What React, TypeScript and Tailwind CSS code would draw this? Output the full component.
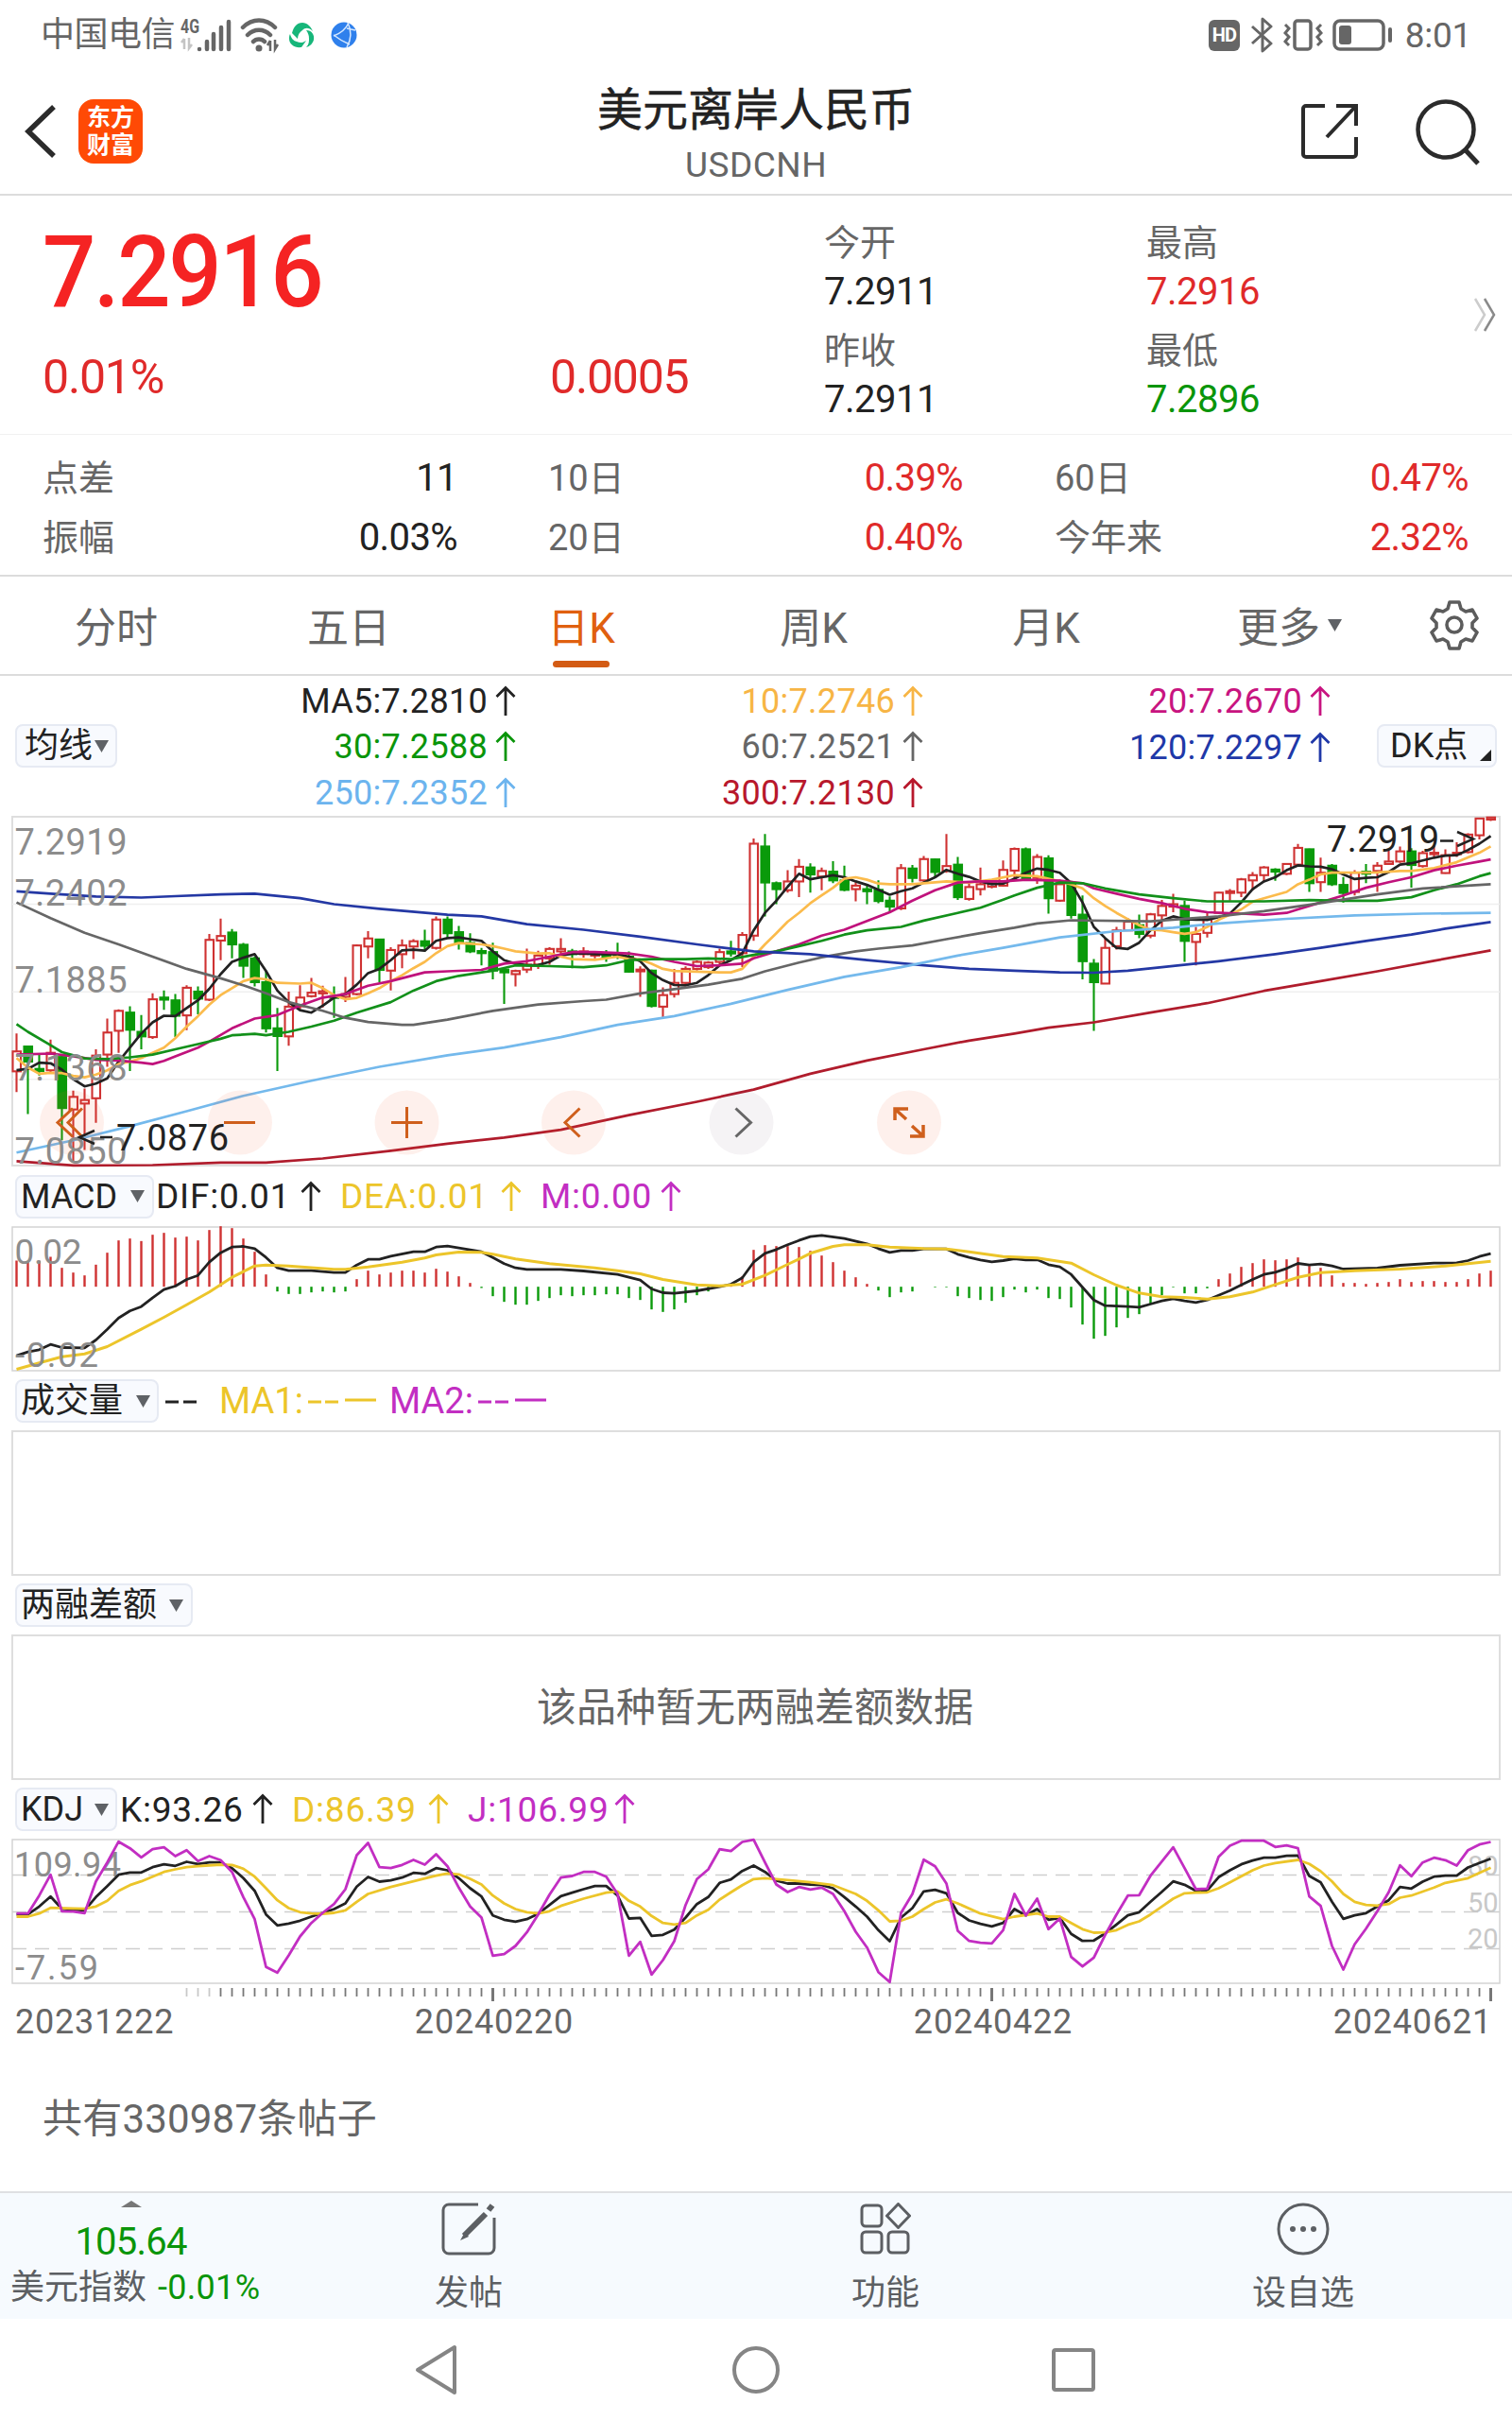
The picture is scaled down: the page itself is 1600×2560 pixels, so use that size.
import React from "react";
import clsx from "clsx";

/* ---------- chart data ---------- */

// one slot per trading day
const STEP = 12;
const X0 = 5.5;
const xAt = (i: number) => X0 + i * STEP;

type Candle = [number, number, number, number, number];
// high, body top, body bottom, low, 1 = up / 0 = down
const CANDLES: Candle[] = [
  [1035, 1086, 1143, 1202, 1], [1070, 1072, 1115, 1265, 0], [1095, 1136, 1142, 1155, 0], [1052, 1090, 1140, 1145, 1],
  [1095, 1102, 1248, 1340, 0], [1198, 1216, 1252, 1400, 1], [1192, 1225, 1235, 1368, 1], [1080, 1098, 1220, 1290, 1],
  [992, 1032, 1095, 1130, 1], [966, 970, 1027, 1090, 1], [957, 975, 1024, 1142, 0], [982, 1030, 1043, 1080, 0],
  [920, 937, 1045, 1050, 1], [912, 932, 938, 967, 0], [922, 940, 984, 1045, 0], [897, 904, 983, 1025, 1],
  [900, 915, 935, 980, 0], [750, 767, 938, 942, 1], [706, 756, 769, 825, 1], [736, 746, 780, 820, 0],
  [776, 781, 841, 876, 0], [815, 820, 888, 900, 0], [855, 888, 1020, 1032, 0], [962, 1020, 1042, 1142, 0],
  [915, 958, 1043, 1070, 1], [897, 932, 957, 965, 1], [876, 918, 928, 932, 1], [898, 914, 920, 960, 1],
  [900, 928, 933, 990, 0], [873, 922, 930, 945, 1], [780, 783, 922, 926, 1], [742, 763, 786, 820, 1],
  [764, 766, 853, 888, 0], [788, 796, 855, 912, 1], [766, 783, 808, 848, 1], [765, 771, 786, 822, 1],
  [738, 771, 784, 800, 0], [700, 709, 790, 795, 1], [700, 709, 748, 760, 0], [727, 745, 775, 795, 0],
  [748, 776, 800, 805, 0], [790, 799, 805, 840, 0], [775, 802, 855, 880, 0], [845, 852, 860, 950, 0],
  [852, 856, 865, 900, 1], [792, 838, 852, 862, 1], [798, 812, 838, 850, 1], [788, 793, 820, 838, 1],
  [762, 793, 800, 815, 1], [793, 800, 808, 848, 0], [788, 800, 808, 818, 1], [800, 806, 812, 820, 1],
  [796, 808, 816, 830, 0], [775, 805, 812, 822, 0], [800, 815, 858, 860, 0], [843, 852, 857, 930, 1],
  [852, 855, 956, 960, 0], [903, 925, 958, 992, 1], [850, 890, 922, 932, 1], [843, 850, 890, 900, 1],
  [826, 830, 850, 855, 1], [828, 832, 845, 850, 1], [792, 802, 830, 840, 1], [770, 800, 806, 815, 0],
  [745, 753, 805, 845, 1], [477, 492, 755, 770, 1], [464, 500, 603, 700, 0], [600, 605, 622, 665, 0],
  [568, 600, 625, 632, 1], [536, 558, 600, 645, 1], [548, 560, 580, 632, 0], [560, 570, 586, 625, 1],
  [542, 572, 597, 605, 0], [555, 597, 624, 628, 0], [603, 612, 622, 657, 1], [612, 622, 628, 665, 0],
  [597, 624, 656, 662, 0], [643, 655, 672, 685, 0], [550, 562, 677, 682, 1], [553, 563, 590, 603, 0],
  [527, 536, 597, 600, 1], [535, 537, 573, 588, 0], [464, 556, 570, 575, 1], [530, 552, 645, 653, 0],
  [605, 616, 650, 655, 1], [560, 608, 622, 640, 1], [595, 605, 615, 620, 1], [540, 567, 612, 615, 1],
  [503, 507, 569, 598, 1], [503, 508, 592, 598, 0], [522, 530, 590, 607, 1], [525, 534, 648, 692, 0],
  [595, 608, 655, 658, 1], [598, 604, 696, 706, 0], [640, 695, 828, 880, 0], [822, 835, 888, 1027, 0],
  [762, 790, 892, 893, 1], [730, 740, 785, 795, 1], [705, 715, 740, 742, 1], [695, 725, 750, 762, 0],
  [690, 694, 755, 762, 1], [653, 670, 697, 735, 1], [635, 665, 672, 688, 1], [655, 670, 770, 830, 0],
  [730, 750, 773, 840, 1], [690, 705, 747, 760, 1], [630, 632, 690, 692, 1], [622, 628, 633, 655, 1],
  [590, 594, 632, 645, 1], [573, 582, 597, 625, 1], [556, 560, 582, 600, 1], [562, 566, 572, 598, 0],
  [548, 550, 578, 582, 1], [493, 504, 552, 556, 1], [506, 508, 605, 630, 0], [532, 575, 602, 630, 1],
  [550, 555, 608, 613, 0], [587, 610, 633, 660, 0], [568, 575, 630, 640, 1], [550, 572, 578, 605, 0],
  [545, 555, 570, 630, 1], [510, 543, 550, 552, 1], [500, 514, 543, 547, 1], [505, 514, 553, 618, 0],
  [512, 519, 556, 560, 1], [498, 518, 522, 530, 1], [508, 525, 576, 578, 1], [488, 518, 522, 530, 1],
  [462, 466, 516, 520, 1], [418, 420, 468, 480, 1], [416, 417, 423, 427, 1],
];

const MA5 = [
  1140, 1136, 1118, 1120, 1138, 1165, 1186, 1178, 1163, 1115, 1075, 1035, 1003, 984, 985, 962, 940, 907, 865, 830, 818,
  808, 856, 912, 945, 968, 975, 955, 932, 922, 895, 862, 850, 825, 797, 795, 798, 770, 762, 760, 765, 770, 800, 825,
  835, 840, 839, 830, 812, 806, 805, 808, 808, 808, 815, 828, 862, 882, 896, 897, 890, 868, 840, 825, 805, 740, 690,
  655, 615, 578, 594, 588, 582, 588, 600, 610, 624, 638, 628, 620, 603, 588, 567, 578, 587, 600, 608, 606, 592, 575,
  563, 567, 575, 605, 660, 730, 762, 790, 793, 775, 740, 712, 700, 708, 709, 710, 702, 692, 660, 622, 600, 588, 568,
  554, 557, 558, 565, 580, 593, 590, 588, 573, 552, 548, 540, 532, 526, 525, 510, 492, 470,
];

// the slower averages are stored as day, value pairs
const MA10 = [
  0, 1105, 1, 1132, 2, 1150, 3, 1147, 4, 1148, 5, 1156, 6, 1160, 7, 1152, 8, 1140, 9, 1122, 10, 1115, 11, 1105, 12,
  1090, 13, 1075, 14, 1048, 15, 1015, 16, 985, 17, 952, 18, 925, 19, 905, 20, 885, 21, 876, 22, 880, 23, 890, 25, 892,
  26, 890, 27, 905, 28, 925, 29, 937, 30, 933, 31, 920, 32, 905, 33, 885, 34, 868, 35, 848, 36, 830, 37, 805, 38, 785,
  39, 776, 41, 780, 42, 785, 43, 792, 44, 800, 46, 806, 47, 805, 48, 815, 49, 822, 51, 824, 53, 815, 54, 822, 55, 823,
  56, 835, 57, 850, 58, 856, 60, 858, 62, 860, 63, 860, 64, 850, 65, 815, 66, 780, 67, 748, 68, 715, 69, 690, 70, 662,
  71, 640, 72, 618, 73, 592, 74, 588, 75, 595, 76, 606, 77, 608, 79, 608, 82, 600, 84, 603, 86, 595, 88, 582, 90, 585,
  92, 600, 93, 608, 94, 620, 95, 648, 96, 670, 97, 690, 98, 708, 99, 725, 100, 738, 101, 740, 102, 745, 103, 750, 104,
  745, 105, 730, 106, 710, 107, 695, 108, 680, 109, 658, 110, 648, 112, 630, 113, 608, 114, 595, 115, 580, 116, 575,
  120, 574, 122, 570, 123, 570, 125, 562, 127, 545, 129, 518, 130, 500,
];
const MA20 = [
  0, 1095, 3, 1092, 5, 1100, 7, 1110, 9, 1112, 11, 1118, 12, 1122, 13, 1113, 14, 1100, 16, 1075, 17, 1058, 19, 1020,
  21, 992, 23, 982, 25, 955, 27, 932, 29, 922, 31, 898, 33, 885, 36, 860, 38, 857, 41, 853, 43, 835, 45, 828, 47, 815,
  49, 802, 51, 802, 54, 806, 56, 815, 58, 830, 60, 842, 62, 840, 64, 835, 65, 820, 67, 800, 69, 780, 71, 755, 73, 738,
  75, 713, 77, 688, 79, 655, 81, 625, 83, 603, 85, 600, 87, 600, 89, 595, 92, 598, 94, 605, 95, 620, 97, 635, 99, 650,
  101, 662, 103, 678, 105, 688, 108, 692, 110, 695, 112, 690, 113, 680, 115, 660, 117, 640, 119, 618, 121, 602, 123,
  588, 125, 568, 127, 555, 129, 543, 130, 537,
];
const MA30 = [
  0, 1008, 1, 1030, 3, 1068, 4, 1088, 6, 1106, 8, 1108, 10, 1103, 12, 1095, 14, 1080, 16, 1065, 18, 1050, 19, 1040,
  21, 1036, 22, 1040, 24, 1030, 26, 1015, 28, 998, 30, 975, 33, 945, 35, 912, 37, 885, 39, 870, 42, 855, 44, 840, 47,
  842, 50, 845, 52, 840, 54, 825, 56, 822, 59, 822, 61, 820, 63, 822, 65, 810, 67, 800, 69, 785, 71, 770, 73, 752, 75,
  740, 78, 730, 80, 712, 83, 690, 85, 675, 87, 652, 88, 640, 90, 618, 92, 603, 94, 605, 96, 620, 99, 637, 102, 648,
  105, 657, 110, 657, 114, 653, 117, 655, 120, 655, 123, 645, 125, 625, 127, 608, 129, 585, 130, 576,
];
const MA60 = [
  0, 660, 3, 705, 6, 747, 9, 780, 12, 815, 15, 850, 18, 877, 20, 897, 22, 920, 24, 945, 27, 970, 29, 990, 31, 1002, 34,
  1010, 35, 1010, 38, 995, 42, 970, 46, 952, 50, 942, 52, 938, 55, 920, 58, 908, 61, 895, 64, 878, 66, 857, 69, 832,
  71, 817, 74, 800, 76, 792, 79, 783, 82, 765, 85, 748, 88, 732, 90, 720, 93, 711, 100, 714, 106, 700, 110, 685, 114,
  667, 117, 652, 120, 637, 124, 620, 130, 608,
];
const MA120 = [
  0, 628, 3, 635, 7, 643, 11, 646, 14, 642, 18, 637, 21, 635, 25, 648, 28, 665, 32, 678, 38, 695, 41, 700, 45, 722, 50,
  738, 55, 758, 60, 780, 65, 800, 70, 808, 75, 825, 80, 840, 84, 850, 88, 855, 92, 860, 95, 861, 98, 855, 101, 845,
  106, 828, 111, 808, 115, 790, 119, 770, 123, 752, 126, 735, 130, 716,
];
const MA250 = [
  0, 1375, 5, 1340, 10, 1300, 15, 1257, 20, 1213, 26, 1170, 32, 1130, 38, 1097, 43, 1075, 48, 1045, 53, 1010, 58, 985,
  63, 950, 68, 910, 73, 873, 78, 845, 83, 812, 87, 790, 92, 760, 97, 742, 102, 732, 106, 720, 112, 707, 118, 697, 124,
  692, 130, 690,
];
const MA300 = [
  0, 1400, 5, 1412, 12, 1411, 18, 1404, 22, 1404, 27, 1392, 33, 1370, 38, 1350, 43, 1332, 48, 1310, 54, 1268, 60, 1230,
  65, 1195, 70, 1150, 75, 1112, 80, 1080, 84, 1055, 88, 1035, 91, 1018, 95, 1003, 100, 975, 105, 948, 110, 913, 115,
  885, 120, 857, 125, 827, 130, 797,
];

const HIST_ZERO = 243;
const HIST = [
  160, 165, 160, 148, 183, 198, 207, 173, 135, 96, 90, 98, 78, 72, 87, 84, 96, 63, 51, 57, 90, 132, 204, 258, 266, 266,
  261, 258, 261, 258, 219, 192, 204, 198, 192, 192, 198, 186, 195, 210, 231, 247, 273, 291, 300, 300, 288, 279, 270,
  273, 270, 270, 267, 267, 279, 285, 315, 323, 315, 294, 270, 258, 245, 235, 210, 126, 111, 114, 114, 117, 129, 144,
  165, 192, 213, 234, 255, 276, 261, 258, 243, 245, 245, 273, 279, 285, 288, 276, 252, 261, 252, 279, 282, 309, 363,
  408, 399, 372, 342, 330, 297, 270, 245, 264, 264, 248, 219, 201, 180, 168, 156, 159, 156, 150, 177, 183, 207, 231,
  231, 234, 231, 228, 219, 228, 225, 225, 228, 228, 219, 201, 192,
];
const DIF = [
  0, 462, 1, 450, 2, 443, 3, 426, 4, 436, 6, 437, 7, 412, 8, 378, 9, 342, 10, 320, 11, 306, 12, 278, 13, 252, 14, 241,
  15, 220, 16, 207, 17, 165, 18, 135, 19, 117, 20, 115, 21, 122, 22, 150, 23, 183, 24, 192, 26, 192, 28, 198, 29, 198,
  30, 174, 31, 156, 32, 156, 33, 146, 35, 132, 36, 132, 37, 117, 38, 114, 39, 120, 41, 132, 42, 150, 43, 170, 44, 183,
  45, 188, 48, 188, 50, 193, 53, 204, 55, 222, 56, 250, 57, 262, 58, 264, 60, 256, 62, 243, 63, 235, 64, 215, 65, 165,
  66, 137, 67, 125, 68, 110, 69, 96, 70, 84, 71, 80, 73, 90, 75, 107, 76, 122, 77, 134, 78, 128, 79, 128, 80, 123, 82,
  123, 83, 140, 84, 150, 85, 158, 86, 164, 87, 160, 88, 154, 89, 158, 90, 157, 91, 173, 92, 180, 93, 204, 94, 245, 95,
  285, 96, 303, 98, 306, 99, 308, 100, 298, 101, 288, 102, 281, 103, 288, 104, 293, 105, 285, 106, 270, 107, 255, 108,
  237, 109, 220, 110, 204, 111, 197, 112, 185, 113, 169, 114, 174, 115, 171, 116, 177, 117, 187, 120, 184, 122, 175,
  125, 168, 127, 167, 128, 160, 129, 147, 130, 138,
];
const DEA = [
  0, 505, 2, 485, 4, 465, 6, 456, 8, 433, 11, 378, 13, 340, 15, 300, 17, 260, 19, 213, 20, 195, 21, 177, 22, 174, 24,
  177, 28, 188, 29, 188, 31, 180, 34, 165, 36, 152, 37, 142, 39, 133, 41, 134, 42, 140, 44, 155, 47, 170, 51, 183, 53,
  192, 55, 202, 57, 220, 60, 237, 62, 240, 64, 235, 66, 207, 68, 172, 69, 155, 70, 137, 72, 115, 73, 110, 75, 110, 77,
  117, 80, 122, 82, 123, 84, 132, 87, 147, 90, 152, 93, 168, 95, 205, 97, 238, 99, 263, 101, 275, 103, 277, 105, 282,
  107, 275, 109, 260, 111, 236, 113, 213, 115, 198, 118, 192, 122, 187, 126, 177, 130, 162,
];

const K = [
  405, 405, 380, 348, 387, 390, 392, 350, 315, 279, 272, 272, 255, 246, 251, 238, 245, 240, 240, 258, 290, 330, 405,
  440, 434, 425, 412, 400, 388, 370, 317, 286, 301, 297, 288, 273, 276, 258, 265, 290, 322, 348, 408, 422, 428, 420,
  403, 375, 347, 336, 325, 315, 315, 345, 418, 416, 473, 470, 453, 415, 372, 350, 305, 294, 267, 250, 270, 298, 307,
  307, 310, 312, 322, 350, 380, 412, 455, 490, 415, 385, 332, 327, 338, 400, 424, 435, 443, 432, 388, 408, 388, 422,
  416, 467, 489, 488, 465, 437, 408, 398, 365, 333, 300, 311, 330, 329, 287, 265, 246, 234, 225, 225, 219, 218, 283,
  303, 365, 419, 408, 401, 380, 360, 318, 323, 301, 285, 282, 282, 256, 242, 228,
];
const D = [
  0, 412, 1, 412, 2, 402, 3, 384, 5, 386, 6, 387, 7, 380, 8, 362, 9, 330, 10, 312, 11, 300, 12, 285, 13, 270, 14, 262,
  15, 255, 16, 252, 18, 247, 19, 248, 20, 260, 21, 285, 22, 322, 23, 360, 24, 385, 25, 398, 26, 402, 27, 403, 28, 400,
  29, 392, 30, 365, 31, 340, 33, 318, 35, 300, 37, 282, 38, 275, 39, 278, 40, 292, 41, 310, 42, 345, 43, 370, 44, 388,
  45, 398, 46, 402, 47, 395, 48, 378, 50, 355, 52, 336, 53, 332, 54, 362, 55, 380, 56, 410, 57, 432, 58, 437, 59, 432,
  60, 408, 61, 390, 62, 358, 63, 335, 64, 312, 65, 293, 66, 290, 68, 296, 70, 303, 72, 312, 74, 340, 75, 362, 76, 392,
  77, 427, 78, 425, 79, 412, 80, 388, 81, 367, 82, 357, 83, 370, 85, 402, 87, 420, 88, 412, 90, 402, 91, 412, 92, 412,
  93, 432, 94, 452, 95, 463, 96, 462, 97, 455, 98, 438, 99, 427, 100, 405, 101, 380, 102, 355, 103, 338, 104, 336, 105,
  335, 106, 322, 107, 303, 109, 265, 110, 250, 111, 242, 113, 232, 114, 245, 115, 268, 116, 300, 117, 340, 118, 365,
  119, 375, 120, 377, 121, 372, 122, 352, 123, 345, 125, 320, 126, 305, 128, 290, 130, 257,
];
const J = [
  402, 402, 345, 279, 395, 396, 401, 300, 240, 174, 195, 224, 198, 192, 220, 201, 236, 220, 233, 270, 350, 420, 572,
  590, 535, 475, 432, 400, 372, 325, 217, 178, 255, 258, 248, 232, 247, 214, 252, 320, 380, 415, 536, 531, 505, 462,
  405, 342, 288, 283, 270, 270, 285, 340, 536, 492, 596, 550, 490, 375, 293, 262, 198, 204, 175, 168, 240, 310, 334,
  318, 326, 320, 340, 395, 460, 510, 588, 620, 400, 340, 231, 252, 307, 457, 489, 495, 497, 455, 340, 408, 355, 452,
  418, 540, 570, 542, 470, 405, 345, 344, 282, 237, 192, 258, 325, 323, 222, 187, 171, 171, 171, 191, 186, 195, 348,
  378, 505, 580, 500, 450, 395, 335, 249, 284, 240, 225, 233, 250, 201, 183, 175,
];

const priceY = (v: number) => (v - 415) / 2.703 + 1;
const macdY = (v: number) => (v - 52) / 3 + 0.5;
const kdjY = (v: number) => (v - 166) / 3 + 0.5;

const dense = (values: number[]) => values.flatMap((v, i) => [i, v]);

const UP = "#cf3232";
const DOWN = "#0a9a0a";

const Line = ({ data, y, color, width = 2.7 }: { data: number[]; y: (v: number) => number; color: string; width?: number }) => {
  const pts: string[] = [];
  for (let i = 0; i < data.length; i += 2) pts.push(`${xAt(data[i])},${y(data[i + 1]).toFixed(1)}`);
  return <polyline points={pts.join(" ")} fill="none" stroke={color} strokeWidth={width} strokeLinejoin="round" />;
};

/* ---------- small pieces ---------- */

const Arrow = ({ className }: { className?: string }) => (
  <svg className={clsx("shrink-0", className)} width="22" height="34" viewBox="0 0 22 34" fill="none" stroke="currentColor" strokeWidth="2.800">
    <path d="M11 32V3M1.5 12 11 2.5 20.5 12" />
  </svg>
);

const Caret = ({ className }: { className?: string }) => (
  <svg className={clsx("shrink-0", className)} width="15" height="13" viewBox="0 0 15 13">
    <path d="M0 0h15L7.500 13z" fill="#5f6266" />
  </svg>
);

const Chip = ({ children, className }: { children: React.ReactNode; className?: string }) => (
  <div
    className={clsx(
      "flex h-[46px] shrink-0 items-center justify-between whitespace-nowrap rounded-lg border-2 border-[#e6eaf3] bg-[#f8fafe] text-[36px] leading-[42px] text-[#222]",
      className
    )}
  >
    {children}
  </div>
);

const Indicator = ({ label, color, className }: { label: string; color: string; className?: string }) => (
  <div className={clsx("flex items-center text-[37px] leading-none tracking-[0.8px]", color, className)}>
    <span className="flex-1 whitespace-nowrap">{label}</span>
    <Arrow />
  </div>
);

/* ---------- sections ---------- */

const StatusBar = () => (
  <div className="flex h-[74px] items-center justify-between pl-[43px] pr-[43px] text-[#666]">
    <div className="flex items-center">
      <span className="text-[36px] leading-none tracking-[-0.5px]">中国电信</span>
      <svg className="ml-[2px]" width="58" height="40" viewBox="0 0 58 40">
        <text x="4" y="18" fontSize="20" fontWeight="700" fill="#666" textLength="20" lengthAdjust="spacingAndGlyphs">4G</text>
        <path d="M8 24v11M8 24l-3 4M13 23v11l3-4" stroke="#c4c4c4" strokeWidth="2.500" fill="none" />
        <g stroke="#666" strokeWidth="4.500" strokeLinecap="round">
          <path d="M24 35v0M32 27v8M39 19v16M47 12v23M55 6v29" />
        </g>
      </svg>
      <svg className="ml-[9px]" width="42" height="40" viewBox="0 0 42 40">
        <g fill="none" stroke="#666" strokeWidth="4.500" strokeLinecap="round">
          <path d="M3 12c10-10 24-10 34 0M8 20c7-7 17-7 24 0M14 27c3-3.500 9-3.500 12 0" />
        </g>
        <circle cx="20" cy="34" r="3.500" fill="#666" />
        <path d="M32 26v11M32 26l-3 5M37 25v10l3-5" stroke="#666" strokeWidth="2.500" fill="none" />
      </svg>
      <svg className="ml-[9px]" width="28" height="28" viewBox="0 0 28 28">
        <g fill="#17b67a">
          <path d="M15 1c5 0 9 4 11 9-4-4-8-4-11-1-3 2-5 5-5 9L4 12C6 5 9 1 15 1z" />
          <path d="M2 13c1 4 3 7 7 8 4 2 7 1 10-1l-5 7C7 28 1 24 1 18c0-2 0-3 1-5z" />
          <path d="M19 9c6 0 9 5 8 10-1 4-4 7-8 8 3-3 3-6 3-9 0-4-1-6-3-9z" />
        </g>
      </svg>
      <svg className="ml-[17px]" width="28" height="28" viewBox="0 0 28 28">
        <circle cx="14" cy="14" r="13.500" fill="#2f80ec" />
        <path d="M19 1c-3 7-8 11-16 14M3 14c5 4 10 7 17 10M18 1c4 8 4 17-1 26M17 7l9 2" stroke="#d6e8ff" strokeWidth="1.500" fill="none" />
      </svg>
    </div>
    <div className="flex items-center">
      <div className="flex h-[33px] w-[33px] items-center justify-center rounded-md bg-[#666] text-[20px] font-bold leading-none tracking-[-1px] text-white">HD</div>
      <svg className="ml-[11px]" width="24" height="38" viewBox="0 0 24 38" fill="none" stroke="#666" strokeWidth="3">
        <path d="M2 10l20 18-9 8V2l9 8L2 28" strokeLinejoin="round" />
      </svg>
      <svg className="ml-[11px]" width="42" height="36" viewBox="0 0 42 36" fill="none" stroke="#666" strokeWidth="3.500">
        <rect x="12" y="3" width="17" height="30" rx="3" />
        <path d="M2 7l4 4-4 5 4 4-4 5 4 4M40 7l-4 4 4 5-4 4 4 5-4 4" strokeWidth="3" />
      </svg>
      <svg className="ml-[10px]" width="64" height="36" viewBox="0 0 64 36">
        <rect x="2" y="3" width="52" height="30" rx="6" fill="none" stroke="#666" strokeWidth="3.500" />
        <rect x="7" y="8" width="13" height="20" rx="3" fill="#666" />
        <rect x="59" y="10" width="4" height="16" rx="2" fill="#666" />
      </svg>
      <span className="ml-[13px] text-[37px] leading-none tracking-[-0.300px]">8:01</span>
    </div>
  </div>
);

const Header = () => (
  <header className="grid h-[133px] grid-cols-[400px_1fr_400px] border-b-2 border-[#dcdcdc]">
    <div className="flex items-start pl-[26px] pt-[31px]">
      <svg className="mt-[6px]" width="34" height="56" viewBox="0 0 34 56" fill="none" stroke="#2b2b2b" strokeWidth="5.500">
        <path d="M31 2 4 28l27 26" />
      </svg>
      <div className="ml-[23px] flex h-[68px] w-[68px] flex-col items-center justify-center rounded-[16px] bg-[#ff4a05] text-[25px] font-bold leading-[29px] text-white">
        <span>东方</span>
        <span>财富</span>
      </div>
    </div>
    <div className="flex flex-col items-center pt-[19px]">
      <h1 className="text-[48px] leading-[48px] text-[#222] [-webkit-text-stroke:0.5px_#222]">美元离岸人民币</h1>
      <span className="mt-[16px] text-[37px] leading-[36px] tracking-[0.500px] text-[#666]">USDCNH</span>
    </div>
    <div className="flex items-start justify-end pr-[32px] pt-[30px]">
      <svg className="mt-[4px]" width="64" height="62" viewBox="0 0 64 62" fill="none" stroke="#2b2b2b" strokeWidth="4">
        <path d="M27 4H7a3 3 0 0 0-3 3v48a3 3 0 0 0 3 3h50a3 3 0 0 0 3-3V37M39 4h21v21M60 4 29 37" />
      </svg>
      <svg className="ml-[57px]" width="72" height="72" viewBox="0 0 72 72" fill="none" stroke="#2b2b2b" strokeWidth="4.500">
        <circle cx="34" cy="33" r="29.500" />
        <path d="M54 54 68 69" strokeWidth="5" />
      </svg>
    </div>
  </header>
);

const QuoteCell = ({ label, value, color }: { label: string; value: string; color: string }) => (
  <div className="flex flex-col">
    <span className="text-[38px] leading-[52px] text-[#666]">{label}</span>
    <span className={clsx("text-[40px] leading-[52px] tracking-[-0.5px]", color)}>{value}</span>
  </div>
);

const Quote = () => (
  <section className="flex h-[253px] border-b border-[#f1f1f1]">
    <div className="flex w-[872px] flex-col pl-[45px]">
      <span className="origin-left scale-x-[0.945] pt-[29px] text-[105px] font-medium leading-[105px] tracking-[-2.500px] text-[#f52323]">7.2916</span>
      <div className="mt-[33px] flex text-[50px] leading-[50px] tracking-[-1.2px] text-[#e02a2a]">
        <span className="w-[537px]">0.01%</span>
        <span>0.0005</span>
      </div>
    </div>
    <div className="flex w-[341px] flex-col gap-[10px] pt-[24px]">
      <QuoteCell label="今开" value="7.2911" color="text-[#222]" />
      <QuoteCell label="昨收" value="7.2911" color="text-[#222]" />
    </div>
    <div className="flex w-[346px] flex-col gap-[10px] pt-[24px]">
      <QuoteCell label="最高" value="7.2916" color="text-[#e02a2a]" />
      <QuoteCell label="最低" value="7.2896" color="text-[#0a950a]" />
    </div>
    <svg className="mt-[107px]" width="26" height="38" viewBox="0 0 26 38" fill="none" strokeWidth="2.500">
      <path d="M2 2l10 17L2 36" stroke="#ccc" />
      <path d="M12 2l10 17-10 17" stroke="#8a8a8a" />
    </svg>
  </section>
);

const STATS = [
  [["点差", "11"], ["振幅", "0.03%"]],
  [["10日", "0.39%"], ["20日", "0.40%"]],
  [["60日", "0.47%"], ["今年来", "2.32%"]],
];

const Stats = () => (
  <section className="flex h-[150px] border-b-2 border-[#dcdcdc] pl-[45px] pt-[14px]">
    {STATS.map((col, c) => (
      <div key={c} className={clsx("flex flex-col", c === 0 && "w-[439px]", c === 1 && "ml-[96px] w-[439px]", c === 2 && "ml-[97px] w-[438px]")}>
        {col.map(([label, value]) => (
          <div key={label} className="flex h-[63px] items-center justify-between">
            <span className="text-[38px] leading-none text-[#666]">{label}</span>
            <span className={clsx("text-[40px] leading-none tracking-[-0.6px]", c === 0 ? "text-[#222]" : "text-[#e02a2a]")}>{value}</span>
          </div>
        ))}
      </div>
    ))}
  </section>
);

const TABS = ["分时", "五日", "日K", "周K", "月K"];

const Tabs = () => (
  <nav className="flex h-[105px] items-stretch border-b-2 border-[#dcdcdc] text-[44px] text-[#666]">
    {TABS.map((t) => (
      <div key={t} className={clsx("flex w-[246px] flex-col items-center", t === "日K" && "text-[#e0600f]")}>
        <span className="mt-[22px] h-[65px] leading-[66px]">{t}</span>
        {t === "日K" && <span className="mt-[2px] h-[7px] w-[60px] rounded-full bg-[#d35b14]" />}
      </div>
    ))}
    <div className="flex w-[282px] items-start pl-[79px]">
      <span className="mt-[22px] leading-[66px]">更多</span>
      <Caret className="ml-[8px] mt-[45px]" />
    </div>
    <svg className="mt-[24px]" width="54" height="54" viewBox="0 0 54 54" fill="none" stroke="#5c5c5c" strokeWidth="3.600" strokeLinejoin="round">
      <path d="M22 3h10l2 7 5 3 7-2 5 9-5 5v5l5 5-5 9-7-2-5 3-2 7H22l-2-7-5-3-7 2-5-9 5-5v-5l-5-5 5-9 7 2 5-3z" />
      <circle cx="27" cy="27" r="8" />
    </svg>
  </nav>
);

const MA_COLUMNS = [
  { width: "w-[422px]", rows: [["MA5:7.2810", "text-[#222]"], ["30:7.2588", "text-[#0a950a]"], ["250:7.2352", "text-[#6cb4ee]"]] },
  { width: "w-[431px]", rows: [["10:7.2746", "text-[#f7b545]"], ["60:7.2521", "text-[#666]"], ["300:7.2130", "text-[#b8182c]"]] },
  { width: "w-[431px]", rows: [["20:7.2670", "text-[#c81480]"], ["120:7.2297", "text-[#2038a8]"]] },
];

const Averages = () => (
  <section className="flex h-[148px] pl-4 pr-4">
    <Chip className="mt-[51px] w-[108px] pl-[8px] pr-[7px]">
      <span>均线</span>
      <Caret />
    </Chip>
    {MA_COLUMNS.map((col) => (
      <div key={col.rows[0][0]} className={clsx("flex flex-col pt-[3px]", col.width)}>
        {col.rows.map(([label, color]) => (
          <div key={label} className={clsx("flex h-[48.500px] items-center justify-end text-[36px] leading-none tracking-[0.300px]", color)}>
            <span>{label}</span>
            <Arrow className="ml-[8px]" />
          </div>
        ))}
      </div>
    ))}
    <Chip className="relative ml-auto mt-[51px] w-[127px] pl-[12px]">
      <span>DK点</span>
      <svg className="absolute bottom-[5px] right-[4px]" width="12" height="12" viewBox="0 0 12 12">
        <path d="M12 0v12H0z" fill="#222" />
      </svg>
    </Chip>
  </section>
);

const CONTROL_Y = 324.5;

const PriceChart = () => (
  <svg className="block overflow-visible" width="1576" height="371" viewBox="0 0 1576 371">
    <rect x="1" y="1" width="1574" height="369" fill="#fff" stroke="#dedede" strokeWidth="2" />
    {[665, 916, 1166].map((v) => (
      <path key={v} d={`M1 ${priceY(v)}H1575`} stroke="#efefef" strokeWidth="1.500" />
    ))}
    {CANDLES.map(([h, t, b, l, up], i) => {
      const x = xAt(i);
      const color = up ? UP : DOWN;
      return (
        <g key={i} stroke={color} strokeWidth="2.100">
          <path d={`M${x} ${priceY(h)}V${priceY(t)}M${x} ${priceY(b)}V${priceY(l)}`} />
          <rect x={x - 4} y={priceY(t)} width="8.500" height={Math.max(priceY(b) - priceY(t), 1)} fill={up ? "none" : color} />
        </g>
      );
    })}
    <Line data={dense(MA5)} y={priceY} color="#222" />
    <Line data={MA10} y={priceY} color="#fbbb4c" />
    <Line data={MA20} y={priceY} color="#c0127c" />
    <Line data={MA30} y={priceY} color="#12901a" />
    <Line data={MA60} y={priceY} color="#666" />
    <Line data={MA120} y={priceY} color="#2438a4" />
    <Line data={MA250} y={priceY} color="#74b9ec" />
    <Line data={MA300} y={priceY} color="#b01c2c" />

    {[[64, 0], [242, 0], [418.5, 0], [595, 0], [772.5, 1], [950, 0]].map(([x, off]) => (
      <circle key={x} cx={x} cy={CONTROL_Y} r="34" fill={off ? "#5a3050" : "#f05a28"} fillOpacity={off ? 0.06 : 0.09} />
    ))}
    <g fill="none" stroke="#cf5f1c" strokeWidth="3">
      <path d="M65 309.500 49 324.500l16 15M75 309.500 60 324.500l15 15" />
      <path d="M225 324.500h33" />
      <path d="M402 324.500h33M418.500 308v33" />
      <path d="M601.500 309.500 586 324.500l15.500 15" />
      <path d="M766.500 309.500l16 15-16 15" stroke="#666" />
      <path d="M935 322v-12h14M936 311l11 10M965 327v12h-14M964 338l-11-10" strokeWidth="3.500" />
    </g>

    <g fill="#8c8c8c" fontSize="38">
      <text x="3.500" y={priceY(522)} textLength="119">7.2919</text>
      <text x="3.500" y={priceY(668)} textLength="119">7.2402</text>
      <text x="3.500" y={priceY(918)} textLength="119">7.1885</text>
      <text x="3.500" y={priceY(1168)} textLength="119">7.1368</text>
      <text x="3.500" y={priceY(1407)} textLength="119">7.0850</text>
    </g>
    <g fill="#222" fontSize="38">
      <text x="111" y={priceY(1370)} textLength="119">7.0876</text>
      <text x="1392" y={priceY(515)} textLength="119">7.2919</text>
    </g>
    <path d="M88 333 72 340l16 7M94 340h13M1512 26.500h14M1530 17l17 7.500-17 7.500" fill="none" stroke="#222" strokeWidth="2.500" />
  </svg>
);

const MacdChart = () => (
  <svg className="block overflow-visible" width="1576" height="154" viewBox="0 0 1576 154">
    <rect x="1" y="1" width="1574" height="152" fill="#fff" stroke="#d4d4d4" strokeWidth="1.500" />
    {HIST.map((v, i) => (
      <path key={i} d={`M${xAt(i)} ${macdY(HIST_ZERO)}V${macdY(v)}`} stroke={v < HIST_ZERO ? UP : DOWN} strokeWidth="2.400" />
    ))}
    <Line data={DIF} y={macdY} color="#222" width={2.8} />
    <Line data={DEA} y={macdY} color="#ecc52a" width={3} />
    <g fill="#8c8c8c" fontSize="37">
      <text x="3.500" y="40" textLength="71">0.02</text>
      <text x="4" y="149" textLength="88">-0.02</text>
    </g>
  </svg>
);

const KdjChart = () => (
  <svg className="block overflow-visible" width="1576" height="154" viewBox="0 0 1576 154">
    <rect x="1" y="1" width="1574" height="152" fill="#fff" stroke="#d4d4d4" strokeWidth="1.500" />
    {[280, 397, 514].map((v) => (
      <path key={v} d={`M1 ${kdjY(v)}H1575`} stroke="#cfcfcf" strokeWidth="1.300" strokeDasharray="15 9" />
    ))}
    <g fill="#c8c8c8" fontSize="29">
      <text x="1541" y="39">80</text>
      <text x="1541" y="78">50</text>
      <text x="1541" y="116">20</text>
    </g>
    <g fill="#8c8c8c" fontSize="36">
      <text x="3" y="40" textLength="113">109.94</text>
      <text x="4" y="149" textLength="88">-7.59</text>
    </g>
    <Line data={dense(K)} y={kdjY} color="#222" width={2.8} />
    <Line data={D} y={kdjY} color="#ecc52a" width={2.8} />
    <Line data={dense(J)} y={kdjY} color="#c22ec2" width={2.8} />
  </svg>
);

const TICKS = Array.from({ length: 116 }, (_, i) => i + 15);

const DateAxis = () => (
  <div className="h-[72px]">
    <svg className="block" width="1576" height="22" viewBox="0 0 1576 22">
      {TICKS.map((i) => {
        const major = i === 42 || i === 86 || i === 130;
        return <path key={i} d={`M${xAt(i)} 4V${major ? 18 : 13}`} stroke="#777" strokeWidth={major ? 3 : 1.8} opacity={i < 18 ? 0.4 : 1} />;
      })}
    </svg>
    <div className="grid grid-cols-[419px_176px_352px_176px_1fr] pl-[4px] pr-[9px] text-[36px] leading-[36px] tracking-[0.8px] text-[#666]">
      <span>20231222</span>
      <span className="text-center">20240220</span>
      <span />
      <span className="text-center">20240422</span>
      <span className="text-right">20240621</span>
    </div>
  </div>
);

const BottomBar = () => (
  <footer className="flex h-[135px] border-t-2 border-[#dfe0e3] bg-[#f6fafe] text-[36px] leading-none text-[#5c5f63]">
    <div className="flex w-[277px] flex-col items-center text-[#0a950a]">
      <svg className="mt-[8px]" width="22" height="7" viewBox="0 0 22 7">
        <path d="M11 0 22 7H0z" fill="#777" />
      </svg>
      <span className="mt-[16px] text-[40px] leading-[42px] tracking-[-0.8px]">105.64</span>
      <div className="mt-[7px] flex w-full items-center pl-[11px] leading-[40px]">
        <span className="text-[#5c5f63]">美元指数</span>
        <span className="ml-[12px] tracking-[0.300px]">-0.01%</span>
      </div>
    </div>
    <div className="flex w-[438px] flex-col items-center pt-[10px]">
      <svg width="58" height="56" viewBox="0 0 58 56" fill="none" stroke="#5c5f63" strokeWidth="3">
        <path d="M39 2H8a6 6 0 0 0-6 6v40a6 6 0 0 0 6 6h42a6 6 0 0 0 6-6V16" />
        <path d="M47 12 24 35M54 3l-4 5" strokeWidth="6" />
        <path d="M25 31l-5 9 9-4z" fill="#5c5f63" stroke="none" />
      </svg>
      <span className="mt-[20px] leading-[40px]">发帖</span>
    </div>
    <div className="flex w-[444px] flex-col items-center pt-[10px]">
      <svg width="54" height="56" viewBox="0 0 54 56" fill="none" stroke="#5c5f63" strokeWidth="3">
        <rect x="2" y="3" width="21" height="22" rx="4" />
        <rect x="2" y="31" width="21" height="22" rx="4" />
        <rect x="30" y="31" width="21" height="22" rx="4" />
        <path d="M40.500 1.500 52.500 14l-12 12.500L28.500 14z" strokeLinejoin="round" />
      </svg>
      <span className="mt-[20px] leading-[40px]">功能</span>
    </div>
    <div className="flex w-[440px] flex-col items-center pt-[10px]">
      <svg width="58" height="56" viewBox="0 0 58 56">
        <circle cx="29" cy="28" r="26" fill="none" stroke="#5c5f63" strokeWidth="3" />
        <g fill="#5c5f63">
          <circle cx="18" cy="28" r="3" />
          <circle cx="29" cy="28" r="3" />
          <circle cx="40" cy="28" r="3" />
        </g>
      </svg>
      <span className="mt-[20px] leading-[40px]">设自选</span>
    </div>
  </footer>
);

const SystemNav = () => (
  <div className="flex h-[107px] items-center pl-[438px]">
    <svg width="48" height="54" viewBox="0 0 48 54" fill="none" stroke="#858585" strokeWidth="4" strokeLinejoin="round">
      <path d="M43 3v48L4 27z" />
    </svg>
    <svg className="ml-[288px]" width="52" height="52" viewBox="0 0 52 52" fill="none" stroke="#858585" strokeWidth="4">
      <circle cx="26" cy="26" r="23" />
    </svg>
    <svg className="ml-[286px]" width="48" height="48" viewBox="0 0 48 48" fill="none" stroke="#858585" strokeWidth="4">
      <rect x="3" y="3" width="42" height="42" rx="2" />
    </svg>
  </div>
);

const DashRun = () => (
  <svg width="74" height="8" viewBox="0 0 74 8" stroke="currentColor" strokeWidth="3">
    <path d="M1 5h14M19 5h14M40 3h33" />
  </svg>
);

export default function App() {
  return (
    <div className="flex h-[2560px] w-[1600px] flex-col overflow-hidden bg-white font-[Roboto,'Noto_Sans_CJK_SC',sans-serif]">
      <StatusBar />
      <Header />
      <Quote />
      <Stats />
      <Tabs />
      <Averages />

      <div className="flex flex-col px-3">
        <PriceChart />

        <div className="flex h-[63px] items-center pl-1">
          <Chip className="w-[147px] pl-[4px] pr-[8px]"><span>MACD</span><Caret /></Chip>
          <Indicator className="ml-[2px] w-[175px]" label="DIF:0.01" color="text-[#222]" />
          <Indicator className="ml-[20px] w-[192px]" label="DEA:0.01" color="text-[#ecc52a]" />
          <Indicator className="ml-[20px] w-[149px]" label="M:0.00" color="text-[#c22ec2]" />
        </div>
        <MacdChart />

        <div className="flex h-[62px] items-center pl-1">
          <Chip className="w-[152px] pl-[4px] pr-[7px]"><span>成交量</span><Caret /></Chip>
          <svg className="ml-[6px]" width="36" height="8" viewBox="0 0 36 8" stroke="#222" strokeWidth="3"><path d="M1 5h14M20 5h14" /></svg>
          <div className="ml-[22px] flex items-center text-[38px] leading-none text-[#ecc52a]">
            <span className="w-[93px]">MA1:</span>
            <DashRun />
          </div>
          <div className="ml-[13px] flex items-center text-[38px] leading-none text-[#c22ec2]">
            <span className="w-[93px]">MA2:</span>
            <DashRun />
          </div>
        </div>
        <div className="h-[154px] border-2 border-[#dedede]" />

        <div className="flex h-[62px] items-center pl-1">
          <Chip className="w-[188px] pl-[4px] pr-[8px]"><span>两融差额</span><Caret /></Chip>
        </div>
        <div className="flex h-[154px] items-center justify-center border-2 border-[#dedede] pr-[2px] text-[42px] text-[#666]">该品种暂无两融差额数据</div>

        <div className="flex h-[62px] items-center pl-1">
          <Chip className="w-[108px] pl-[4px] pr-[7px]"><span>KDJ</span><Caret /></Chip>
          <Indicator className="ml-[3px] w-[162px]" label="K:93.26" color="text-[#222]" />
          <Indicator className="ml-[20px] w-[166px]" label="D:86.39" color="text-[#ecc52a]" />
          <Indicator className="ml-[20px] w-[177px]" label="J:106.99" color="text-[#c22ec2]" />
        </div>
        <KdjChart />
        <DateAxis />
      </div>

      <div className="flex flex-1 items-center pb-[5px] pl-[45px] text-[42px] leading-none tracking-[0.2px] text-[#666]">共有330987条帖子</div>

      <BottomBar />
      <SystemNav />
    </div>
  );
}
